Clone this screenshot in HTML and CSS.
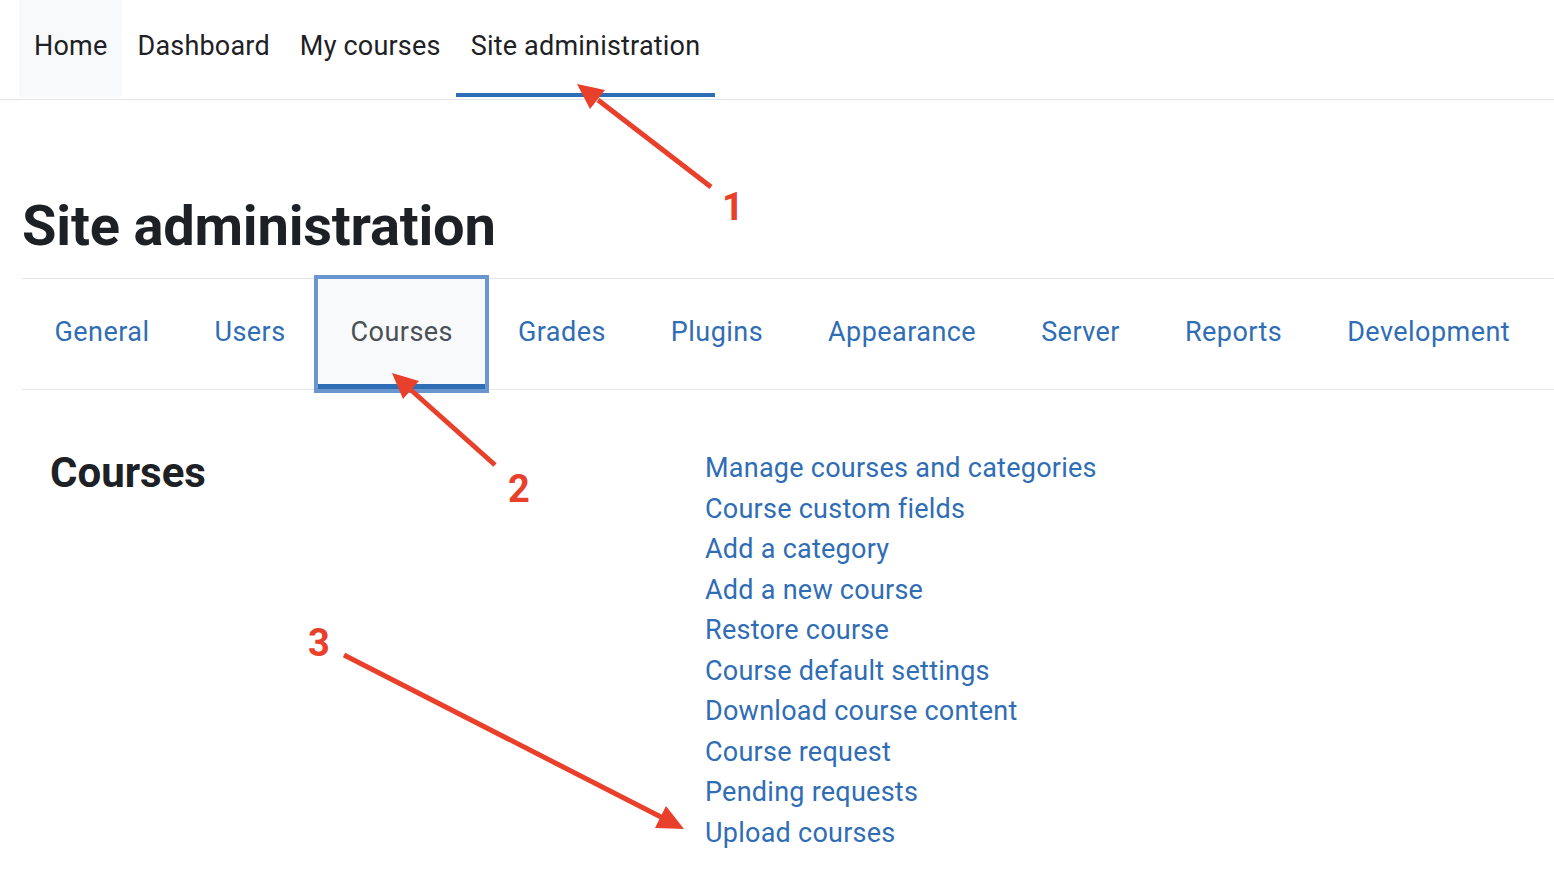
FILE: index.html
```html
<!DOCTYPE html>
<html lang="en">
<head>
  <meta charset="UTF-8">
  <meta name="viewport" content="width=device-width, initial-scale=1.0">
  <title>Site administration</title>
  <link rel="stylesheet" href="styles.css">
</head>
<body>

  <nav class="primary-nav">
    <a class="nav-item home" href="#">Home</a>
    <a class="nav-item" href="#">Dashboard</a>
    <a class="nav-item" href="#">My courses</a>
    <a class="nav-item active" href="#">Site administration</a>
  </nav>

  <main class="page">
    <h1>Site administration</h1>

    <ul class="tabs">
      <li><a href="#">General</a></li>
      <li><a href="#">Users</a></li>
      <li><a class="current" href="#">Courses</a></li>
      <li><a href="#">Grades</a></li>
      <li><a href="#">Plugins</a></li>
      <li><a href="#">Appearance</a></li>
      <li><a href="#">Server</a></li>
      <li><a href="#">Reports</a></li>
      <li><a href="#">Development</a></li>
    </ul>

    <section class="category">
      <h2>Courses</h2>
      <ul class="links">
        <li><a href="#">Manage courses and categories</a></li>
        <li><a href="#">Course custom fields</a></li>
        <li><a href="#">Add a category</a></li>
        <li><a href="#">Add a new course</a></li>
        <li><a href="#">Restore course</a></li>
        <li><a href="#">Course default settings</a></li>
        <li><a href="#">Download course content</a></li>
        <li><a href="#">Course request</a></li>
        <li><a href="#">Pending requests</a></li>
        <li><a href="#">Upload courses</a></li>
      </ul>
    </section>
  </main>

  <!-- annotation arrows drawn over the screenshot -->
  <svg class="annotations" width="1554" height="878" viewBox="0 0 1554 878">
    <g class="arrow">
      <line x1="711" y1="187" x2="598" y2="100" />
      <polygon points="577,84 605,90 590,109" />
      <text x="733" y="220">1</text>
    </g>
    <g class="arrow">
      <line x1="495" y1="465" x2="411" y2="390" />
      <polygon points="392,373 419,381 403,399" />
      <text x="519" y="502">2</text>
    </g>
    <g class="arrow">
      <line x1="344" y1="655" x2="661" y2="817" />
      <polygon points="684,829 655,828 666,806" />
      <text x="319" y="656">3</text>
    </g>
  </svg>

</body>
</html>
```

FILE: styles.css
```css
body {
  font-family: Roboto, 'Liberation Sans', sans-serif;
  color: #1d2125;
  background-color: #fff;
  margin: 0;
  padding: 0;
  position: relative;
  min-height: 878px;
  overflow: hidden;
}

a {
  text-decoration: none;
  color: #2f6db5;
}

.primary-nav {
  display: flex;
  height: 99px;
  padding-left: 19px;
  border-bottom: 1px solid #e3e5e8;
}

.nav-item {
  display: flex;
  align-items: center;
  height: 97px;
  box-sizing: border-box;
  padding: 0 15px 2px;
  border-bottom: 4px solid transparent;
  font-size: 27px;
  letter-spacing: 0.2px;
  color: #1d2125;
}

.nav-item.home {
  background-color: #f8f9fa;
}

.nav-item.active {
  border-bottom-color: #2f6db5;
}

.page {
  margin-left: 22px;
}

h1 {
  margin: 93px 0 18px;
  font-size: 56px;
  font-weight: 700;
  line-height: 67px;
  letter-spacing: -0.2px;
}

.tabs {
  list-style: none;
  margin: 0;
  padding: 0;
  display: flex;
  border-top: 1px solid #e3e5e8;
  border-bottom: 1px solid #e3e5e8;
}

.tabs a {
  display: flex;
  align-items: center;
  height: 110px;
  box-sizing: border-box;
  padding: 0 32.5px;
  border-bottom: 5px solid transparent;
  font-size: 27px;
  letter-spacing: 0.45px;
}

.tabs a.current {
  color: #495057;
  background-color: #f8f9fa;
  border-bottom-color: #2f6db5;
  outline: 4px solid #6a96cf;
}

.category {
  display: grid;
  grid-template-columns: 655px 1fr;
  margin-top: 58px;
  padding-left: 28px;
}

h2 {
  margin: 0;
  font-size: 42px;
  font-weight: 700;
  line-height: 50px;
}

.links {
  list-style: none;
  margin: 0;
  padding: 0;
}

.links li {
  font-size: 27px;
  line-height: 40.5px;
  letter-spacing: 0.25px;
}

.annotations {
  position: absolute;
  top: 0;
  left: 0;
  pointer-events: none;
}

.arrow line {
  stroke: #e8402a;
  stroke-width: 5;
}

.arrow polygon {
  fill: #e8402a;
}

.arrow text {
  fill: #e8402a;
  font-family: Roboto, 'Liberation Sans', sans-serif;
  font-size: 38px;
  font-weight: 700;
  text-anchor: middle;
}
```
